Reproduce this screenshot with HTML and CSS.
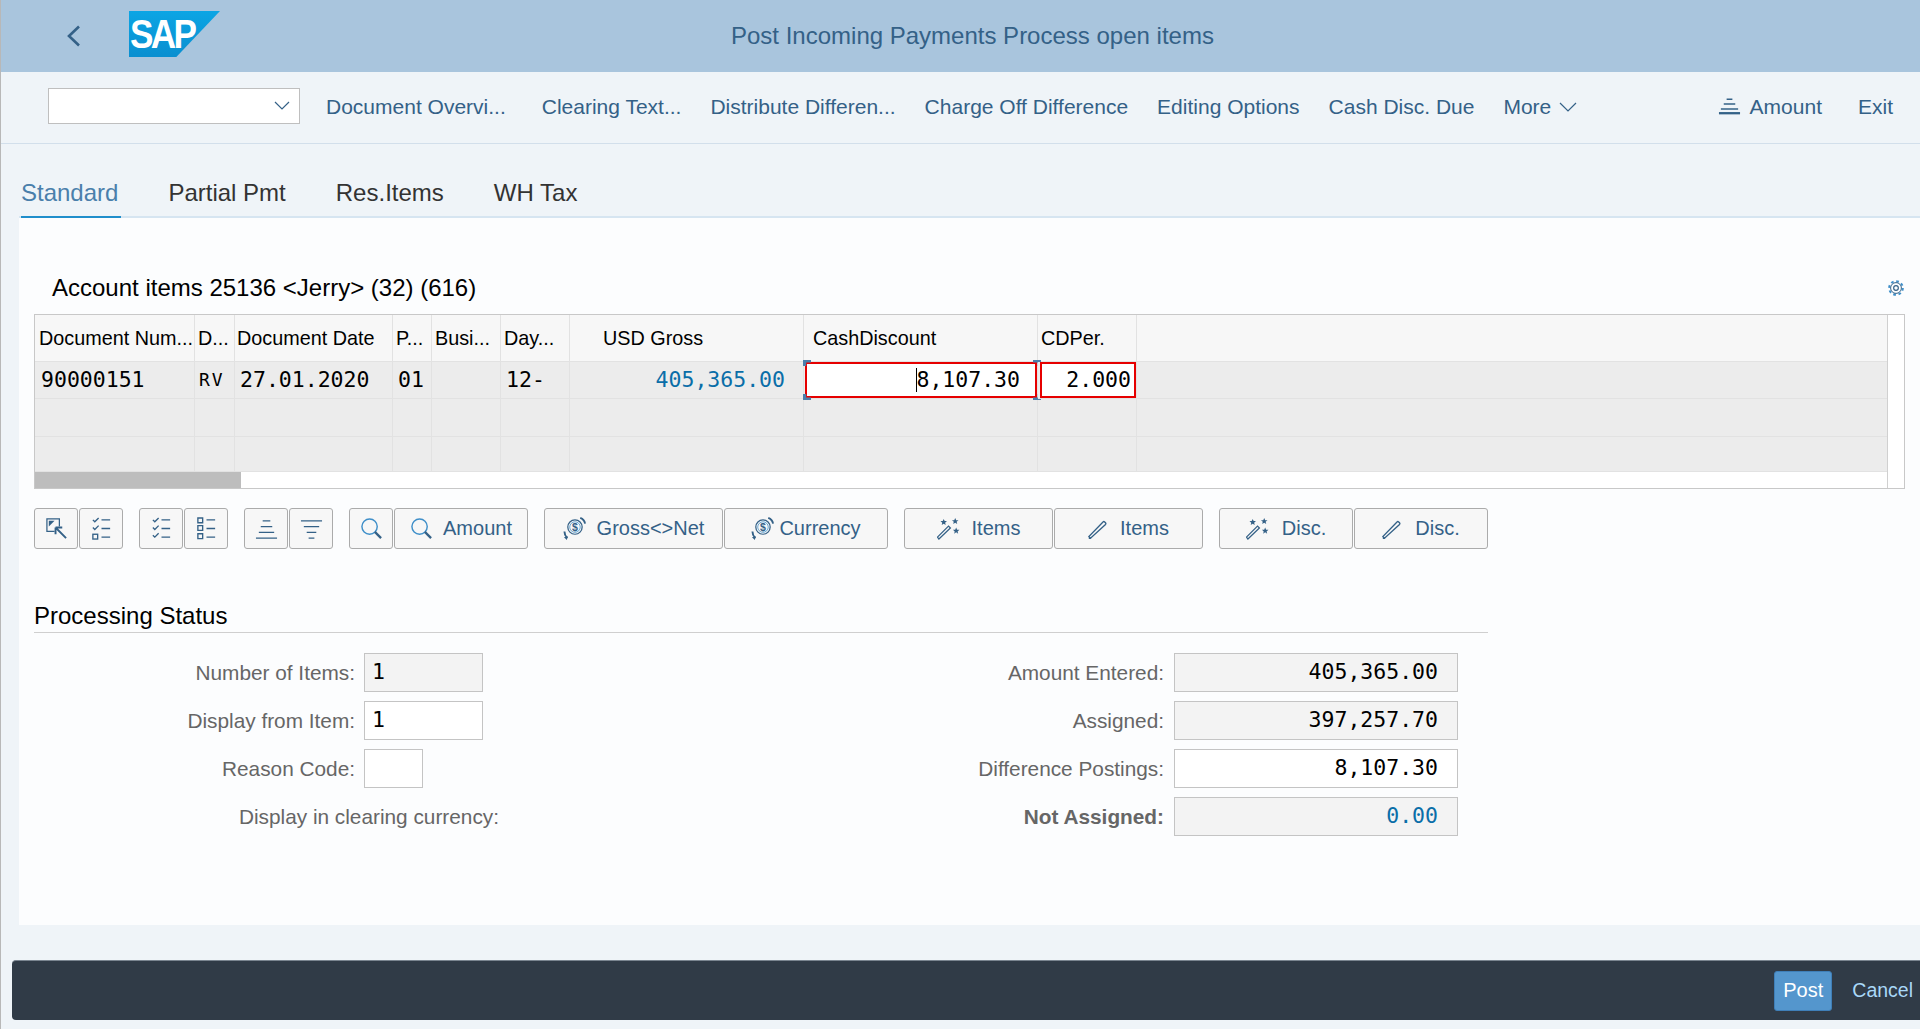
FILE: index.html
```html
<!DOCTYPE html>
<html lang="en">
<head>
  <meta charset="UTF-8">
  <title>Post Incoming Payments Process open items</title>
  <link rel="stylesheet" href="styles.css">
</head>
<body>
  <svg class="icon-defs" width="0" height="0">
    <symbol id="i-select" viewBox="0 0 24 24">
      <path d="M10 15H2V2h13v8" fill="none" stroke="currentColor" stroke-width="1.3"/>
      <path d="M4 4h6l-6 6z" fill="currentColor"/>
      <path d="M22 22 11 11M11 11v7M11 11h7" fill="none" stroke="currentColor" stroke-width="2"/>
    </symbol>
    <symbol id="i-check-last" viewBox="0 0 24 24">
      <path d="M3 3l2 2 4-4M3 11l2 2 4-4M12 3h9M12 12h9M12 21h9" fill="none" stroke="currentColor" stroke-width="1.4"/>
      <rect x="3" y="18" width="5" height="5" fill="none" stroke="currentColor" stroke-width="1.4"/>
    </symbol>
    <symbol id="i-check-all" viewBox="0 0 24 24">
      <path d="M3 3l2 2 4-4M3 11l2 2 4-4M3 19l2 2 4-4M12 3h9M12 12h9M12 21h9" fill="none" stroke="currentColor" stroke-width="1.4"/>
    </symbol>
    <symbol id="i-check-none" viewBox="0 0 24 24">
      <path d="M12 3h9M12 12h9M12 21h9" fill="none" stroke="currentColor" stroke-width="1.4"/>
      <path d="M3 1h5v5H3zM3 9h5v5H3zM3 17.500h5v5H3z" fill="none" stroke="currentColor" stroke-width="1.4"/>
    </symbol>
    <symbol id="i-sort-up" viewBox="0 0 24 24">
      <path d="M8 4h8M6 10h12M4 16h16M1 22h22" fill="none" stroke="currentColor" stroke-width="1.4"/>
    </symbol>
    <symbol id="i-sort-down" viewBox="0 0 24 24">
      <path d="M1 4h22M4 10h16M7 16h10M9 22h6" fill="none" stroke="currentColor" stroke-width="1.4"/>
    </symbol>
    <symbol id="i-search" viewBox="0 0 24 24">
      <circle cx="10" cy="10" r="8" fill="none" stroke="#3f8fc9" stroke-width="1.5"/>
      <path d="M15.500 15.500 22 22" fill="none" stroke="currentColor" stroke-width="2.4"/>
    </symbol>
    <symbol id="i-money" viewBox="0 0 24 24">
      <circle cx="12.500" cy="10.500" r="7.500" fill="none" stroke="currentColor" stroke-width="1.3"/>
      <circle cx="12.500" cy="10.500" r="5.500" fill="none" stroke="#3f8fc9" stroke-width=".8"/>
      <path d="M18 1c2.500 1 4.500 3 5 6" fill="none" stroke="currentColor" stroke-width="2"/>
      <path d="M1.500 15c0 3 1 5 3 7" fill="none" stroke="currentColor" stroke-width="2"/>
      <path d="M1 21l3 3 1-4z" fill="currentColor"/>
    </symbol>
    <symbol id="i-wand" viewBox="0 0 24 24">
      <path d="M2 23 0.500 21 12 9.500l2 2z" fill="none" stroke="currentColor" stroke-width="1.3"/>
      <path d="M7 2l1 2.300h2.400L8.500 6l.6 2.400L7 7 4.900 8.400 5.500 6 3.600 4.300H6zM19 1l1 2.300h2.400L20.500 5l.6 2.400L19 6l-2.100 1.400.6-2.400-1.900-1.700H18zM20 11l1 2.300h2.400L21.500 15l.6 2.400L20 16l-2.100 1.400.6-2.400-1.900-1.700H19z" fill="currentColor"/>
    </symbol>
    <symbol id="i-pencil" viewBox="0 0 24 24">
      <path d="M3 23 1 21 18 3.500a1.500 1.500 0 0 1 2 0l1 1a1.500 1.500 0 0 1 0 2z" fill="none" stroke="currentColor" stroke-width="1.6"/>
      <path d="M1 21v3h3z" fill="currentColor"/>
    </symbol>
  </svg>

  <div class="app">
    <header class="shell">
      <svg class="back" viewBox="0 0 15 21"><path d="M13 1 3 10.500 13 20" fill="none" stroke="currentColor" stroke-width="2.600"/></svg>
      <div class="logo"><span class="logo-text">SAP</span></div>
      <div class="shell-title">Post Incoming Payments Process open items</div>
    </header>

    <nav class="toolbar">
      <div class="combo">
        <svg class="chevron" viewBox="0 0 16 9"><path d="M1 1l7 7 7-7" fill="none" stroke="currentColor" stroke-width="1.200"/></svg>
      </div>
      <a class="tool tool-first">Document Overvi...</a>
      <a class="tool">Clearing Text...</a>
      <a class="tool">Distribute Differen...</a>
      <a class="tool">Charge Off Difference</a>
      <a class="tool">Editing Options</a>
      <a class="tool">Cash Disc. Due</a>
      <a class="tool tool-more">More
        <svg class="chevron-more" viewBox="0 0 18 10"><path d="M1 1l8 8 8-8" fill="none" stroke="currentColor" stroke-width="1.200"/></svg>
      </a>
      <a class="tool tool-amount">
        <svg class="amount-icon" viewBox="0 0 24 17"><path d="M9 1h6M6 6h12M3 11h18" fill="none" stroke="currentColor" stroke-width="1.600"/><path d="M1 15.500h22" fill="none" stroke="currentColor" stroke-width="2.400"/></svg>
        Amount
      </a>
      <a class="tool tool-exit">Exit</a>
    </nav>

    <div class="tabs">
      <a class="tab active">Standard</a>
      <a class="tab">Partial Pmt</a>
      <a class="tab">Res.Items</a>
      <a class="tab">WH Tax</a>
    </div>

    <main class="content">
      <div class="table-title">
        <span>Account items 25136 &lt;Jerry&gt; (32) (616)</span>
        <svg class="gear" viewBox="0 0 20 20">
          <circle cx="10" cy="10" r="7.600" fill="none" stroke="#3f8fc9" stroke-width="2.200" stroke-dasharray="3 2.970"/>
          <circle cx="10" cy="10" r="6" fill="none" stroke="#346187" stroke-width="1.100"/>
          <circle cx="10" cy="10" r="2.600" fill="none" stroke="#346187" stroke-width="1.300"/>
        </svg>
      </div>

      <div class="grid-frame">
        <div class="grid-body">
          <table class="items">
            <colgroup>
              <col class="c-doc"><col class="c-d"><col class="c-date"><col class="c-p"><col class="c-busi">
              <col class="c-day"><col class="c-gross"><col class="c-cash"><col class="c-per"><col>
            </colgroup>
            <thead>
              <tr>
                <th class="th-doc">Document Num...</th><th>D...</th><th class="th-date">Document Date</th><th>P...</th><th>Busi...</th><th>Day...</th>
                <th class="th-gross">USD Gross</th><th class="th-cash">CashDiscount</th><th>CDPer.</th><th></th>
              </tr>
            </thead>
            <tbody>
              <tr class="row-first">
                <td class="td-doc">90000151</td><td class="td-small">RV</td><td>27.01.2020</td><td>01</td><td></td><td>12-</td>
                <td class="num link">405,365.00</td>
                <td class="td-focus">
                  <div class="cell-edit cell-cash"><span class="caret"></span>8,107.30</div>
                  <span class="handle h-tl"></span><span class="handle h-tr"></span><span class="handle h-bl"></span><span class="handle h-br"></span>
                </td>
                <td class="td-focus"><div class="cell-edit cell-per">2.000</div></td>
                <td></td>
              </tr>
              <tr><td></td><td></td><td></td><td></td><td></td><td></td><td></td><td></td><td></td><td></td></tr>
              <tr class="row-last"><td></td><td></td><td></td><td></td><td></td><td></td><td></td><td></td><td></td><td></td></tr>
            </tbody>
          </table>
          <div class="hscroll"><div class="hscroll-thumb"></div></div>
        </div>
        <div class="vscroll"></div>
      </div>

      <div class="actions">
        <div class="btn-group">
          <button class="btn btn-icon"><svg class="ico"><use href="#i-select"/></svg></button>
          <button class="btn btn-icon"><svg class="ico"><use href="#i-check-last"/></svg></button>
        </div>
        <div class="btn-group">
          <button class="btn btn-icon"><svg class="ico"><use href="#i-check-all"/></svg></button>
          <button class="btn btn-icon"><svg class="ico"><use href="#i-check-none"/></svg></button>
        </div>
        <div class="btn-group">
          <button class="btn btn-icon"><svg class="ico"><use href="#i-sort-up"/></svg></button>
          <button class="btn btn-icon"><svg class="ico"><use href="#i-sort-down"/></svg></button>
        </div>
        <div class="btn-group">
          <button class="btn btn-icon"><svg class="ico"><use href="#i-search"/></svg></button>
          <button class="btn btn-amount"><svg class="ico"><use href="#i-search"/></svg>Amount</button>
        </div>
        <div class="btn-group">
          <button class="btn btn-gross"><svg class="ico" viewBox="0 0 24 24"><use href="#i-money"/><text x="12.500" y="14.500" text-anchor="middle" class="icon-dollar">$</text></svg>Gross&lt;&gt;Net</button>
          <button class="btn btn-currency"><svg class="ico" viewBox="0 0 24 24"><use href="#i-money"/><text x="12.500" y="14.500" text-anchor="middle" class="icon-dollar">$</text></svg>Currency</button>
        </div>
        <div class="btn-group">
          <button class="btn btn-items"><svg class="ico"><use href="#i-wand"/></svg>Items</button>
          <button class="btn btn-items"><svg class="ico ico-pen"><use href="#i-pencil"/></svg>Items</button>
        </div>
        <div class="btn-group">
          <button class="btn btn-disc"><svg class="ico"><use href="#i-wand"/></svg>Disc.</button>
          <button class="btn btn-disc"><svg class="ico ico-pen"><use href="#i-pencil"/></svg>Disc.</button>
        </div>
      </div>

      <section class="status">
        <h2>Processing Status</h2>
        <div class="status-form">
          <div class="form-col">
            <div class="form-row">
              <label class="lbl-left">Number of Items:</label>
              <div class="field field-short readonly">1</div>
            </div>
            <div class="form-row">
              <label class="lbl-left">Display from Item:</label>
              <div class="field field-short">1</div>
            </div>
            <div class="form-row">
              <label class="lbl-left">Reason Code:</label>
              <div class="field field-code"></div>
            </div>
            <div class="form-row">
              <label class="lbl-wide">Display in clearing currency:</label>
            </div>
          </div>
          <div class="form-col">
            <div class="form-row">
              <label class="lbl-right">Amount Entered:</label>
              <div class="field field-amount readonly">405,365.00</div>
            </div>
            <div class="form-row">
              <label class="lbl-right">Assigned:</label>
              <div class="field field-amount readonly">397,257.70</div>
            </div>
            <div class="form-row">
              <label class="lbl-right">Difference Postings:</label>
              <div class="field field-amount">8,107.30</div>
            </div>
            <div class="form-row">
              <label class="lbl-right lbl-bold">Not Assigned:</label>
              <div class="field field-amount readonly link">0.00</div>
            </div>
          </div>
        </div>
      </section>
    </main>

    <footer class="footer">
      <button class="post">Post</button>
      <a class="cancel">Cancel</a>
    </footer>
  </div>
</body>
</html>
```

FILE: styles.css
```css
* {
  box-sizing: border-box;
}

html, body {
  margin: 0;
  height: 1029px;
  overflow: hidden;
}

body {
  font-family: "Liberation Sans", Arial, sans-serif;
  font-size: 21px;
  color: #000;
  background-color: #eff4f8;
}

.icon-defs {
  position: absolute;
}

.icon-dollar {
  font-family: "Liberation Sans", Arial, sans-serif;
  font-size: 11px;
  font-weight: bold;
  fill: #346187;
}

.app {
  display: flex;
  flex-direction: column;
  height: 1029px;
  border-left: 1px solid #b8b8b8;
}

/* shell bar */
.shell {
  display: flex;
  align-items: center;
  flex: none;
  height: 72px;
  background-color: #a9c5dd;
  color: #346187;
}

.back {
  width: 15px;
  height: 22px;
  margin-left: 65px;
}

.logo {
  width: 91px;
  height: 46px;
  margin-left: 48px;
  margin-top: -4px;
  padding-left: 1px;
  background: linear-gradient(#0ba5e4, #0a8fd0);
  clip-path: polygon(0 0, 100% 0, 52% 100%, 0 100%);
  color: #fff;
  font-size: 40px;
  font-weight: bold;
  letter-spacing: -3px;
  line-height: 46px;
}

.logo-text {
  display: inline-block;
  transform: scaleX(.88);
  transform-origin: left;
}

.shell-title {
  margin-left: 511px;
  font-size: 24px;
}

/* toolbar */
.toolbar {
  display: flex;
  align-items: center;
  flex: none;
  gap: 29px;
  height: 72px;
  padding-left: 47px;
  border-bottom: 1px solid #d2dfeb;
}

.combo {
  display: flex;
  align-items: center;
  justify-content: flex-end;
  width: 252px;
  height: 36px;
  margin-bottom: 4px;
  padding-right: 9px;
  background: #fff;
  border: 1px solid #bfbfbf;
  color: #346187;
}

.chevron {
  width: 16px;
  height: 9px;
}

.tool {
  margin-bottom: 2px;
  color: #346187;
  white-space: nowrap;
}

.tool-first {
  margin-left: -3px;
  margin-right: 7px;
}

.tool-more {
  display: flex;
  align-items: center;
  gap: 8px;
}

.chevron-more {
  width: 18px;
  height: 10px;
}

.tool-amount {
  display: flex;
  align-items: center;
  gap: 9px;
  margin-left: auto;
}

.amount-icon {
  width: 23px;
  height: 17px;
}

.tool-exit {
  margin-right: 27px;
  margin-left: 7px;
}

/* tabs */
.tabs {
  display: flex;
  align-items: flex-end;
  flex: none;
  gap: 50px;
  height: 74px;
  margin-left: 18px;
  padding-left: 2px;
  border-bottom: 2px solid #d6e5f1;
}

.tab {
  margin-bottom: -2px;
  padding-bottom: 8px;
  border-bottom: 2px solid transparent;
  color: #333;
  font-size: 24px;
  line-height: 30px;
}

.tab.active {
  margin-right: -3px;
  padding-right: 3px;
  color: #4a7fab;
  border-bottom-color: #1f8ecb;
}

/* main panel */
.content {
  flex: 1;
  margin-left: 18px;
  padding: 0 15px;
  background-color: #fcfdfe;
}

.table-title {
  display: flex;
  align-items: center;
  justify-content: space-between;
  height: 28px;
  margin-top: 56px;
  padding-left: 18px;
  font-size: 24px;
}

.gear {
  width: 18px;
  height: 18px;
}

.grid-frame {
  display: flex;
  width: 1871px;
  margin-top: 12px;
  border: 1px solid #c8c8c8;
}

.grid-body {
  width: 1852px;
}

.vscroll {
  flex: 1;
  background: #fff;
  border-left: 1px solid #d0d0d0;
}

.items {
  width: 100%;
  table-layout: fixed;
  border-collapse: separate;
  border-spacing: 0;
}

.c-doc { width: 160px; }
.c-d { width: 40px; }
.c-date { width: 158px; }
.c-p { width: 39px; }
.c-busi { width: 69px; }
.c-day { width: 69px; }
.c-gross { width: 234px; }
.c-cash { width: 234px; }
.c-per { width: 99px; }

.items th {
  height: 47px;
  padding: 0 3px;
  background: #f7f7f7;
  border-right: 1px solid #e2e2e2;
  border-bottom: 1px solid #e2e2e2;
  font-size: 19.800px;
  font-weight: normal;
  text-align: left;
  white-space: nowrap;
}

.items th:last-child,
.items td:last-child {
  border-right: 0;
}

.items .th-doc {
  padding-left: 4px;
}

.items .th-date {
  padding-left: 2px;
}

.items .th-gross {
  padding-left: 33px;
}

.items .th-cash {
  padding-left: 9px;
}

.items td {
  height: 38px;
  padding: 0 5px;
  background: #ececec;
  border-right: 1px solid #e2e2e2;
  border-bottom: 1px solid #e2e2e2;
  font-family: "DejaVu Sans Mono", monospace;
  font-size: 21.500px;
  white-space: nowrap;
}

.items .row-first td {
  height: 37px;
  padding-bottom: 2px;
}

.items .row-last td {
  height: 35px;
}

.items .td-doc {
  padding-left: 6px;
}

.items .row-first .td-small {
  padding-left: 4px;
  font-size: 18px;
  letter-spacing: 2px;
}

.items .num {
  padding-right: 18px;
  text-align: right;
}

.items .link,
.link {
  color: #0a6ea8;
}

.items .row-first .td-focus {
  position: relative;
  padding: 0;
}

.cell-edit {
  height: 36px;
  background: #fff;
  border: 2px solid #e60000;
  line-height: 32px;
  text-align: right;
}

.cell-cash {
  margin-left: 1px;
  padding-right: 15px;
}

.cell-per {
  margin-left: 2px;
  padding-right: 3px;
}

.caret {
  display: inline-block;
  width: 1px;
  height: 24px;
  margin-right: -1px;
  background: #000;
  vertical-align: -5px;
}

.handle {
  position: absolute;
  width: 8px;
  height: 6px;
  background: #4a7fab;
}

.h-tl { top: -2px; left: -1px; clip-path: polygon(0 0, 100% 0, 100% 40%, 40% 40%, 40% 100%, 0 100%); }
.h-tr { top: -2px; right: -4px; clip-path: polygon(0 0, 100% 0, 100% 100%, 60% 100%, 60% 40%, 0 40%); }
.h-bl { bottom: -2px; left: -1px; clip-path: polygon(0 0, 40% 0, 40% 60%, 100% 60%, 100% 100%, 0 100%); }
.h-br { bottom: -2px; right: -4px; clip-path: polygon(60% 0, 100% 0, 100% 100%, 0 100%, 0 60%, 60% 60%); }

.hscroll {
  height: 16px;
  background: #fff;
}

.hscroll-thumb {
  width: 206px;
  height: 100%;
  background: #bdbdbd;
}

/* buttons below the table */
.actions {
  display: flex;
  gap: 16px;
  margin-top: 19px;
}

.btn-group {
  display: flex;
  gap: 1px;
}

.btn {
  display: flex;
  align-items: center;
  justify-content: center;
  height: 41px;
  padding: 0;
  background: #f7f7f7;
  border: 1px solid #ababab;
  border-radius: 3px;
  color: #346187;
  font-family: inherit;
  font-size: 20px;
}

.ico {
  width: 23px;
  height: 23px;
  color: #346187;
}

.ico-pen {
  width: 20px;
  height: 20px;
}

.btn-icon { width: 44px; }
.btn-amount { width: 134px; gap: 10px; }
.btn-gross { width: 179px; gap: 11px; }
.btn-currency { width: 164px; gap: 5px; }
.btn-items { width: 149px; gap: 12px; }
.btn-disc { width: 134px; gap: 13px; }

/* processing status */
.status {
  width: 1454px;
  margin-top: 53px;
}

.status h2 {
  height: 31px;
  margin: 0 0 20px;
  border-bottom: 1px solid #cfcfcf;
  font-size: 24px;
  font-weight: normal;
  line-height: 28px;
}

.status-form {
  display: flex;
}

.form-col {
  display: flex;
  flex-direction: column;
  gap: 9px;
}

.form-row {
  display: flex;
  align-items: center;
  height: 39px;
}

.form-row label {
  margin-right: 9px;
  color: #666;
  font-size: 20.800px;
  text-align: right;
  white-space: nowrap;
}

.form-row .lbl-left {
  width: 321px;
}

.form-row .lbl-wide {
  width: 465px;
  margin-right: 0;
}

.form-row .lbl-right {
  width: 665px;
  margin-right: 10px;
}

.form-row .lbl-bold {
  font-weight: bold;
}

.field {
  height: 39px;
  background: #fff;
  border: 1px solid #c4c4c4;
  font-family: "DejaVu Sans Mono", monospace;
  font-size: 21.500px;
  line-height: 35px;
}

.field.readonly {
  background: #f3f3f3;
}

.field-short {
  width: 119px;
  padding-left: 7px;
}

.field-code {
  width: 59px;
}

.field-amount {
  width: 284px;
  padding-right: 19px;
  text-align: right;
}

/* footer */
.footer {
  display: flex;
  align-items: center;
  justify-content: flex-end;
  flex: none;
  gap: 20px;
  height: 60px;
  margin: 35px 0 9px 11px;
  padding-right: 7px;
  background-color: #303b47;
  border-top: 1px solid #7a8590;
  border-radius: 4px 0 0 4px;
}

.post {
  width: 58px;
  height: 40px;
  padding: 0;
  background: #5496cd;
  border: 1px solid #3f7fb8;
  border-radius: 3px;
  color: #fff;
  font-family: inherit;
  font-size: 20px;
}

.cancel {
  color: #a9d8f8;
  font-size: 19.500px;
}
```
